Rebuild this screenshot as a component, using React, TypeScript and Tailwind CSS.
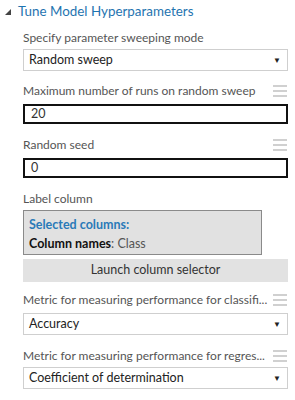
import React from "react";

const font = { fontFamily: 'Lato, "Open Sans", sans-serif' };

function Grip() {
  return (
    <div className="flex flex-col gap-[3px] w-[14px] shrink-0 ml-auto mr-[1px]">
      <div className="h-[2px] bg-[#d0d0d0]" />
      <div className="h-[2px] bg-[#d0d0d0]" />
      <div className="h-[2px] bg-[#d0d0d0]" />
    </div>
  );
}

function Label({ text, grip, mt }: { text: string; grip?: boolean; mt: string }) {
  return (
    <div className={`${mt} h-[18px] flex items-center`}>
      <span className="text-[12px] text-[#555] whitespace-nowrap">{text}</span>
      {grip && <Grip />}
    </div>
  );
}

function Select({ value, mt }: { value: string; mt: string }) {
  return (
    <div className={`${mt} h-[22px] border border-[#cfcfcf] bg-white flex items-center pl-[5px] pr-[6px]`}>
      <span className="text-[12.5px] text-[#222]">{value}</span>
      <span className="ml-auto text-[8px] text-[#222]">▼</span>
    </div>
  );
}

function Input({ value, mt }: { value: string; mt: string }) {
  return (
    <div className={`${mt} h-[20px] border-2 border-[#111] bg-white flex items-center pl-[6px]`}>
      <span className="text-[12.5px] text-[#333]">{value}</span>
    </div>
  );
}

export default function App() {
  return (
    <div className="w-[295px] h-[400px] bg-white overflow-hidden" style={font}>
      <div className="h-[22px] flex items-center pl-[5px]">
        <svg width="6" height="6" viewBox="0 0 6 6" className="mt-[2px]">
          <polygon points="6,0 6,6 0,6" fill="#444" />
        </svg>
        <span className="ml-[7px] text-[13.4px] text-[#1f74b0]">Tune Model Hyperparameters</span>
      </div>
      <div className="pl-[23px] pr-[7px]">
        <Label mt="mt-[7px]" text="Specify parameter sweeping mode" />
        <Select mt="mt-[2px]" value="Random sweep" />
        <Label mt="mt-[11px]" text="Maximum number of runs on random sweep" grip />
        <Input mt="mt-[4px]" value="20" />
        <Label mt="mt-[12px]" text="Random seed" grip />
        <Input mt="mt-[4px]" value="0" />
        <Label mt="mt-[12px]" text="Label column" />
        <div className="mt-[2px] h-[45px] w-[239px] border border-[#8a8a8a] bg-[#e1e1e1] pl-[5px] pt-[4px] text-[12.5px] leading-[19px]">
          <div className="font-bold text-[#2a7ab8]">Selected columns:</div>
          <div className="text-[#555]">
            <span className="font-bold text-[#111]">Column names</span>: Class
          </div>
        </div>
        <div className="mt-[4px] h-[23px] bg-[#e2e2e2] flex items-center justify-center text-[12.5px] text-[#333]">
          Launch column selector
        </div>
        <Label mt="mt-[9px]" text="Metric for measuring performance for classifi..." grip />
        <Select mt="mt-[4px]" value="Accuracy" />
        <Label mt="mt-[12px]" text="Metric for measuring performance for regres..." grip />
        <Select mt="mt-[2px]" value="Coefficient of determination" />
      </div>
    </div>
  );
}
